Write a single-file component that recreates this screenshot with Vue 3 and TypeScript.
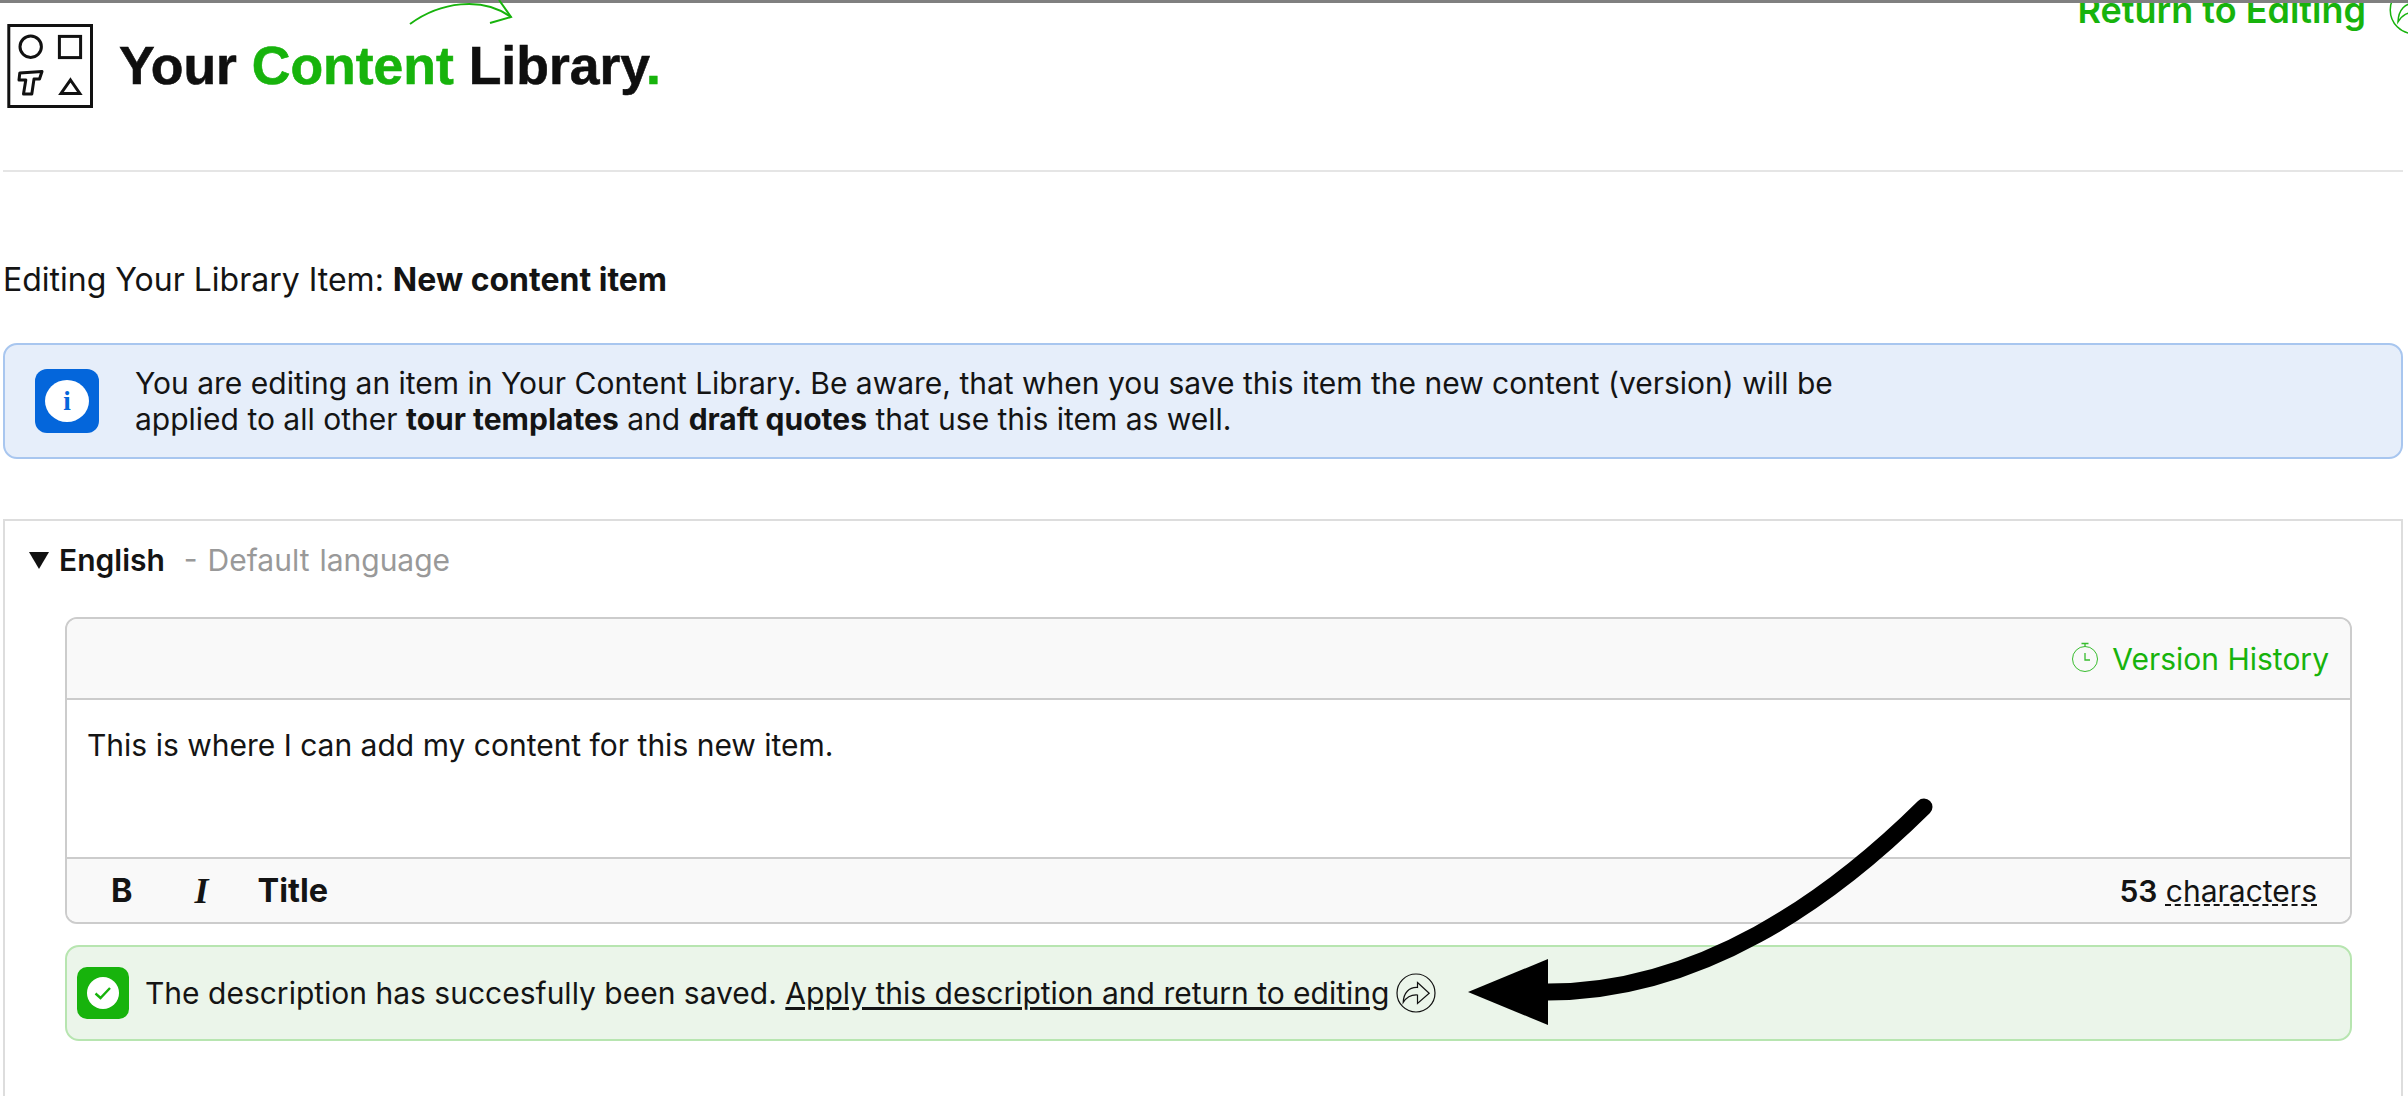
<script setup lang="ts">
const notice = 'You are editing an item in Your Content Library. Be aware, that when you save this item the new content (version) will be'
const saved = 'The description has succesfully been saved.'
const applyLink = 'Apply this description and return to editing'
</script>

<template>
  <div class="page">
    <div class="topline"></div>
    <header class="header">
      <svg class="logo" width="88" height="88" viewBox="0 0 88 88" fill="none" stroke="#111" stroke-width="3">
        <rect x="2.800" y="3.500" width="82.700" height="81" />
        <circle cx="24.700" cy="24.700" r="10.700" />
        <rect x="53.400" y="14.400" width="21.200" height="21.200" />
        <path d="M13.800 51 L36 49.500 L33.500 57 H28 L25.800 72 H17.500 L19.800 58 H13 Z" stroke-linejoin="round" />
        <path d="M64.500 58 L73.800 71.500 H55 Z" />
      </svg>
      <h1 class="title">Your <span class="green">Content</span> Library<span class="green">.</span></h1>
      <a class="return">Return to Editing</a>
      <svg class="return-icon" width="50" height="50" viewBox="0 0 40 40" fill="none" stroke="#17b30c" stroke-width="1.200">
        <circle cx="20" cy="20" r="19" />
        <path d="M21.500 9.500 L33.200 20.200 L21.500 30.500 V22 C15 21.500 11 23.500 7.200 29.500 C7.500 20 13 14 21.500 14.500 Z" />
      </svg>
    </header>

    <main class="main">
      <p class="heading">Editing Your Library Item: <strong>New content item</strong></p>

      <section class="info">
        <span class="info-icon"><span class="info-dot">i</span></span>
        <p class="info-text">
          {{ notice }}<br />
          applied to all other <strong>tour templates</strong> and <strong>draft quotes</strong> that use this item as well.
        </p>
      </section>

      <section class="panel">
        <div class="lang">
          <span class="triangle"></span>
          <strong class="lang-name">English</strong>
          <span class="lang-note">- Default language</span>
        </div>

        <div class="editor">
          <div class="editor-head">
            <svg class="watch" width="28" height="32" viewBox="0 0 28 32" fill="none" stroke="#17b30c" stroke-width="1" opacity="0.85">
              <circle cx="14" cy="18" r="12.5" />
              <path d="M10.500 2.500 H17.500 M14 2.500 V5.500 M14 12 V19 H19" stroke-width="1.300" />
            </svg>
            <span class="history">Version History</span>
          </div>
          <div class="editor-body">This is where I can add my content for this new item.</div>
          <div class="editor-foot">
            <strong class="tool-b">B</strong>
            <em class="tool-i">I</em>
            <strong class="tool-title">Title</strong>
            <span class="count"><strong>53</strong> <span class="dashed">characters</span></span>
          </div>
        </div>

        <div class="success">
          <span class="ok-icon">
            <span class="ok-dot">
              <svg width="18" height="14" viewBox="0 0 18 14" fill="none" stroke="#17b30c" stroke-width="2.400">
                <path d="M1.500 7.500 L6.500 12 L16 2" />
              </svg>
            </span>
          </span>
          <span class="success-text">{{ saved }} <a class="apply">{{ applyLink }}</a></span>
          <svg class="share" width="40" height="40" viewBox="0 0 40 40" fill="none" stroke="#111" stroke-width="1.200">
            <circle cx="20" cy="20" r="19" />
            <path d="M21.500 9.500 L33.200 20.200 L21.500 30.500 V22 C15 21.500 11 23.500 7.200 29.500 C7.500 20 13 14 21.500 14.500 Z" />
          </svg>
        </div>
      </section>
    </main>

    <svg class="annot" width="2408" height="1096" viewBox="0 0 2408 1096" fill="none">
      <path d="M410 24 C440 2 482 -4 511 17" stroke="#17b30c" stroke-width="2" />
      <path d="M499 0 L511 17 L490 23" stroke="#17b30c" stroke-width="2" />
      <path d="M1924 807 C1830 900 1700 992 1548 992" stroke="#000" stroke-width="17" stroke-linecap="round" />
      <path d="M1468 992 L1548 959 V1025 Z" fill="#000" />
    </svg>
  </div>
</template>

<style>
html, body { margin: 0; background: #fff; }
</style>

<style scoped>
.page {
  position: relative;
  width: 2408px;
  height: 1096px;
  overflow: hidden;
  background: #fff;
  color: #141414;
  font-family: Inter, "Liberation Sans", sans-serif;
  font-size: 30px;
  line-height: 36px;
}
.topline {
  position: absolute;
  inset: 0 0 auto 0;
  height: 3px;
  background: #808080;
  z-index: 2;
}
.annot {
  position: absolute;
  inset: 0;
  z-index: 3;
  pointer-events: none;
}
.header {
  display: flex;
  align-items: flex-start;
  height: 170px;
  margin: 0 5px 0 3px;
  border-bottom: 2px solid #e5e5e5;
}
.logo { margin: 22px 0 0 3px; flex: none; }
.title {
  margin: 38px 0 0 25px;
  font: 700 53.500px/56px "Liberation Sans", Arial, sans-serif;
  -webkit-text-stroke: 0.6px currentColor;
  color: #0f0f0f;
  flex: 1;
}
.green { color: #17b30c; }
.return {
  color: #17b30c;
  font-size: 36px;
  font-weight: 600;
  line-height: 40px;
  margin-top: -10px;
  white-space: nowrap;
}
.return-icon { margin: -15px -36px 0 23px; flex: none; }
.main { padding: 0 5px 0 3px; }
.heading {
  margin: 89px 0 44px;
  font-size: 32px;
  line-height: 38px;
}
.info {
  display: flex;
  align-items: center;
  height: 116px;
  box-sizing: border-box;
  padding-left: 30px;
  background: #e6eefa;
  border: 2px solid #a8c6ef;
  border-radius: 14px;
}
.info-icon {
  width: 64px;
  height: 64px;
  border-radius: 12px;
  background: #0466db;
  display: flex;
  align-items: center;
  justify-content: center;
  flex: none;
}
.info-dot {
  width: 44px;
  height: 42px;
  border-radius: 50%;
  background: #fff;
  color: #0466db;
  font: 700 27px/42px "Liberation Serif", serif;
  text-align: center;
}
.info-text { margin: 0 0 0 36px; }
.panel {
  margin-top: 60px;
  height: 640px;
  box-sizing: border-box;
  border: 2px solid #ddd;
  padding: 0 49px 0 60px;
}
.lang {
  display: flex;
  align-items: center;
  height: 96px;
  margin-left: -36px;
  padding-bottom: 18px;
  box-sizing: border-box;
}
.triangle {
  width: 0;
  height: 0;
  border-left: 10px solid transparent;
  border-right: 10px solid transparent;
  border-top: 17px solid #111;
  margin-right: 10px;
}
.lang-name { font-weight: 600; }
.lang-note { margin-left: 19px; color: #999; white-space: pre; word-spacing: 1.500px; }
.editor {
  border: 2px solid #ccc;
  border-radius: 12px;
  overflow: hidden;
  height: 307px;
  box-sizing: border-box;
  display: flex;
  flex-direction: column;
}
.editor-head {
  height: 81px;
  flex: none;
  display: flex;
  align-items: center;
  justify-content: flex-end;
  gap: 13px;
  padding-right: 21px;
  background: #f9f9f9;
  border-bottom: 2px solid #ccc;
  box-sizing: border-box;
}
.watch { margin-bottom: 4px; }
.history { color: #17b30c; }
.editor-body {
  flex: 1;
  padding: 27px 20px 0;
  background: #fff;
  box-sizing: border-box;
}
.editor-foot {
  height: 65px;
  flex: none;
  display: flex;
  align-items: center;
  padding: 0 33px 0 44px;
  background: #f9f9f9;
  border-top: 2px solid #ccc;
  box-sizing: border-box;
}
.editor-foot strong { font-weight: 600; }
.editor-foot .tool-b, .editor-foot .tool-title { font-size: 32.500px; font-weight: 700; }
.tool-i {
  margin-left: 62px;
  font: italic 700 36px "Liberation Serif", serif;
}
.tool-title { margin-left: 49px; }
.count { margin-left: auto; }
.dashed {
  text-decoration: underline dashed 2px;
  text-underline-offset: 3px;
}
.success {
  display: flex;
  align-items: center;
  height: 96px;
  box-sizing: border-box;
  margin-top: 21px;
  padding-left: 10px;
  background: #ebf5ea;
  border: 2px solid #b7e5b0;
  border-radius: 14px;
}
.ok-icon {
  width: 52px;
  height: 52px;
  border-radius: 10px;
  background: #17b30c;
  display: flex;
  align-items: center;
  justify-content: center;
  flex: none;
}
.ok-dot {
  width: 32px;
  height: 32px;
  border-radius: 50%;
  background: #fff;
  display: flex;
  align-items: center;
  justify-content: center;
}
.success-text { margin-left: 16px; white-space: nowrap; }
.apply { text-decoration: underline; text-underline-offset: 3px; }
.share { margin-left: 7px; flex: none; }
</style>
